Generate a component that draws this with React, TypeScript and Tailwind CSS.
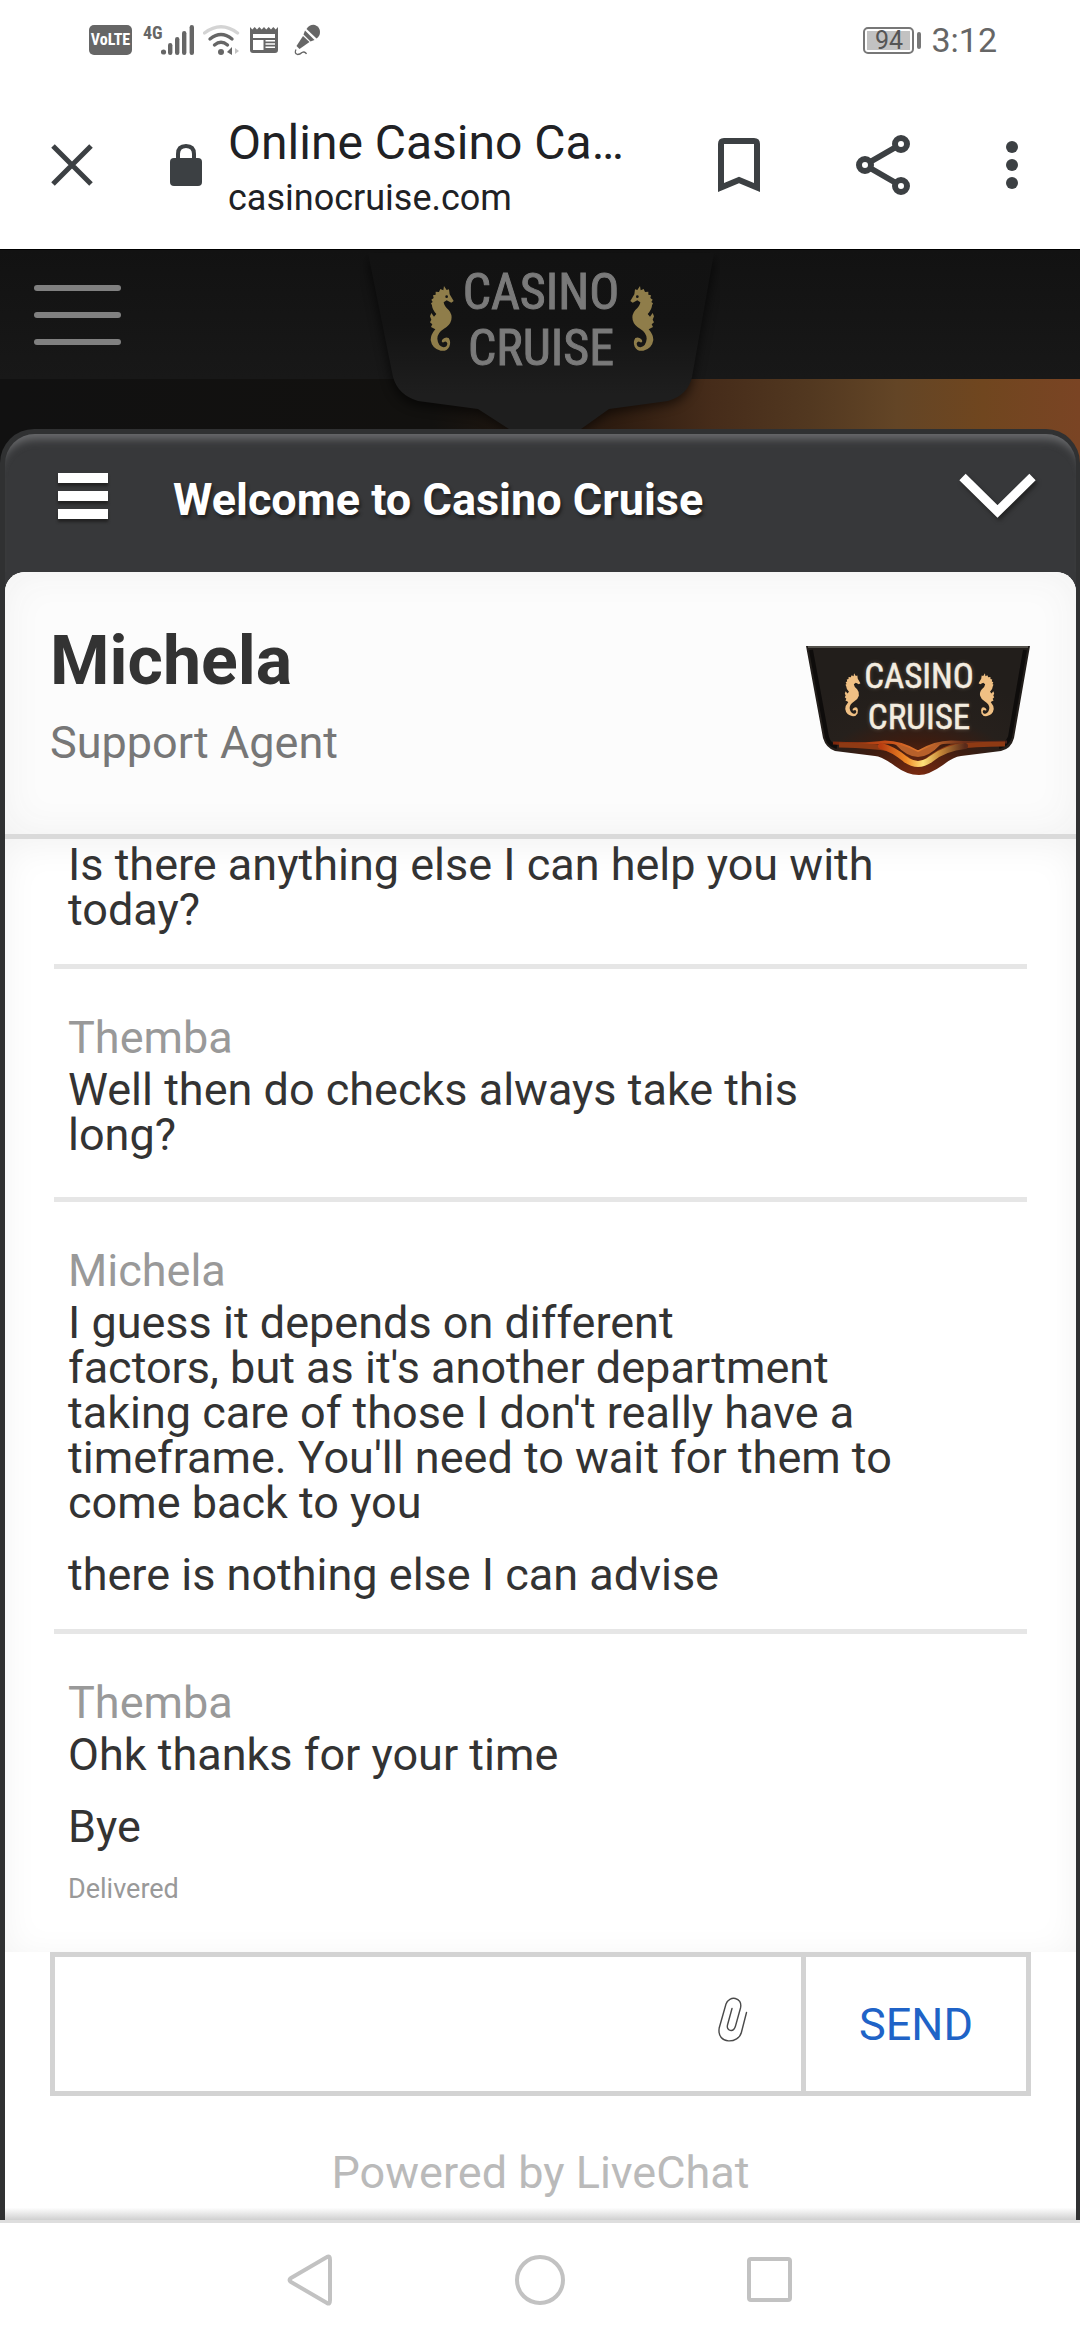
import React from "react";

const SEAHORSE =
  "M282 138 L290 150 L297 148 L299 163 L311 183 L304 188 L290 181 L281 187 Q282 198 296 210 Q308 224 304 240 Q300 256 282 266 Q262 278 262 296 Q264 318 280 322 Q292 322 292 310 Q288 301 281 307 Q273 309 276 300 Q284 289 296 294 Q304 306 298 320 Q290 335 272 332 Q246 326 242 300 Q242 284 256 268 L243 261 L247 253 L240 247 L244 239 L240 229 L244 219 L252 230 L259 222 Q246 208 246 196 L243 190 L248 186 L244 179 L251 174 L249 166 L257 164 L257 155 L267 156 L271 147 L280 151 Z";

const LOGO_FONT = '"Roboto Condensed", "Liberation Sans Narrow", "Roboto", sans-serif';

function HeaderLogo() {
  return (
    <svg viewBox="0 0 360 180" className="h-[180px] w-[360px]" role="img" aria-label="Casino Cruise">
      <defs>
        <linearGradient id="shield" x1="0" y1="0" x2="0" y2="1">
          <stop offset="0" stopColor="#121212" />
          <stop offset="0.4" stopColor="#131313" />
          <stop offset="0.8" stopColor="#1e1e1e" />
          <stop offset="1" stopColor="#1e1e1e" />
        </linearGradient>
        <filter id="shieldShadow" x="-20%" y="-20%" width="140%" height="140%">
          <feGaussianBlur stdDeviation="6" />
        </filter>
      </defs>
      <path d="M8 10 L33 134 Q39 152 57 156 L121 164 L161 188 L211 188 L249 164 L309 155 Q327 150 331 134 L355 10 Z" fill="#000" opacity="0.6" filter="url(#shieldShadow)" />
      <path d="M8 4 L33 128 Q38 146 58 152 L118 160 L149 180 L221 180 L249 160 L308 152 Q328 146 332 128 L354 4 Z" fill="url(#shield)" />
      <g fontFamily={LOGO_FONT} fontSize="50" fontWeight="400" fill="#7a7a7a" stroke="#7a7a7a" strokeWidth="1" textAnchor="middle">
        <text x="181" y="60">CASINO</text>
        <text x="181" y="116">CRUISE</text>
      </g>
      <g fill="#8f7d4a">
        <g transform="translate(-10 -9) scale(0.3333)">
          <path d={SEAHORSE} />
          <circle cx="290" cy="170" r="4" fill="#151515" />
        </g>
        <g transform="translate(374 -9) scale(-0.3333 0.3333)">
          <path d={SEAHORSE} />
          <circle cx="290" cy="170" r="4" fill="#151515" />
        </g>
      </g>
    </svg>
  );
}

function AgentLogo() {
  return (
    <svg viewBox="0 0 226 132" className="h-[132px] w-[226px]" role="img" aria-label="Casino Cruise">
      <defs>
        <radialGradient id="badge" cx="0.5" cy="1" r="0.75">
          <stop offset="0" stopColor="#7a2a10" />
          <stop offset="0.35" stopColor="#3d1c10" />
          <stop offset="0.6" stopColor="#26201c" />
          <stop offset="1" stopColor="#221e1b" />
        </radialGradient>
        <linearGradient id="waveTop" x1="0" x2="1">
          <stop offset="0" stopColor="#7a260c" />
          <stop offset="0.3" stopColor="#c44a16" />
          <stop offset="0.5" stopColor="#e07a30" />
          <stop offset="0.75" stopColor="#6b2f1a" />
          <stop offset="1" stopColor="#47211a" />
        </linearGradient>
        <linearGradient id="waveGold" x1="0" x2="1">
          <stop offset="0" stopColor="#b83c10" />
          <stop offset="0.3" stopColor="#f08a26" />
          <stop offset="0.5" stopColor="#ffe27a" />
          <stop offset="0.7" stopColor="#c88938" />
          <stop offset="1" stopColor="#5a2a1a" />
        </linearGradient>
        <filter id="textGlow" x="-20%" y="-20%" width="140%" height="140%">
          <feGaussianBlur stdDeviation="2" />
        </filter>
      </defs>
      <path d="M1 1 H225 L209 93 Q206 104 196 106 L156 111 Q148 112 138 120 Q124 130 114 130 Q102 130 90 121 Q76 111 70 111 L30 106 Q21 103 18 93 Z" fill="url(#badge)" />
      <path d="M3 2 H223" stroke="#55524c" strokeWidth="2" />
      <path d="M6 5 L22 92 Q24 100 32 102 M220 5 L205 92 Q202 100 194 102" fill="none" stroke="#0e0c0b" strokeWidth="4" />
      <path d="M28 98 Q62 100 80 97 Q96 97 113 107 Q130 97 146 97 Q170 98 202 97" fill="none" stroke="url(#waveTop)" strokeWidth="3" />
      <path d="M90 99 Q102 101 113 107 Q124 101 136 99 Q124 112 113 112 Q102 112 90 99 Z" fill="#b8602a" />
      <path d="M34 100 Q70 101 84 104 Q94 108 102 114 Q113 123 124 114 Q134 106 146 102 Q170 99 200 99" fill="none" stroke="#8e3a14" strokeWidth="5" />
      <path d="M76 101 Q88 104 100 114 Q113 124 126 114 Q140 103 160 101" fill="none" stroke="url(#waveGold)" strokeWidth="6" strokeLinecap="round" />
      <g fontFamily={LOGO_FONT} fontSize="35" fontWeight="400" textAnchor="middle">
        <g fill="#a89880" opacity="0.5" filter="url(#textGlow)">
          <text x="114" y="43">CASINO</text>
          <text x="114" y="84">CRUISE</text>
        </g>
        <g fill="#f4ede0" stroke="#f4ede0" strokeWidth="0.5">
          <text x="114" y="43">CASINO</text>
          <text x="114" y="84">CRUISE</text>
        </g>
      </g>
      <g fill="#f0c084">
        <g transform="translate(-13 -2) scale(0.22)">
          <path d={SEAHORSE} />
        </g>
        <g transform="translate(242 -2) scale(-0.22 0.22)">
          <path d={SEAHORSE} />
        </g>
      </g>
    </svg>
  );
}

function StatusBar() {
  return (
    <div className="flex h-20 items-center justify-between pr-[83px] pl-[89px] text-[#666]">
      <div className="flex items-center">
        <span className="flex h-[30px] w-[43px] items-center justify-center rounded-[5px] bg-[#666] font-['Roboto_Condensed','Liberation_Sans_Narrow',Roboto,sans-serif] text-[16px] leading-none font-bold text-white">
          VoLTE
        </span>
        <span className="ml-[11px] w-[18px] self-start font-['Roboto_Condensed','Liberation_Sans_Narrow',Roboto,sans-serif] text-[18px] leading-none font-bold">
          4G
        </span>
        <svg viewBox="0 0 34 30" className="h-[30px] w-[34px]" fill="currentColor" aria-hidden="true">
          <circle cx="2.5" cy="27" r="2.6" />
          <rect x="7" y="18" width="4.4" height="12" rx="2.2" />
          <rect x="14" y="12" width="4.4" height="18" rx="2.2" />
          <rect x="21" y="6" width="4.4" height="24" rx="2.2" />
          <rect x="28.600" y="0" width="4.400" height="30" rx="2.2" />
        </svg>
        <svg viewBox="0 0 37 30" className="ml-2 h-[30px] w-[37px]" fill="none" stroke="currentColor" strokeWidth="3.4" strokeLinecap="round" aria-hidden="true">
          <path d="M1.500 8 Q18 -4.500 34.500 8" stroke="#d4d4d4" />
          <path d="M7 14 Q18 5 29 14" />
          <path d="M11.500 20 Q18 14.500 24.500 20" />
          <circle cx="18" cy="27" r="3" fill="currentColor" stroke="none" />
          <path d="M29 22 V30 L24 27 Z" fill="currentColor" stroke="none" />
          <path d="M32 23 V29 L36 26 Z" fill="#c4c4c4" stroke="none" />
        </svg>
        <svg viewBox="0 0 28 26" className="ml-[10px] h-[26px] w-7" aria-hidden="true">
          <path d="M0 0 L2.300 2.500 L4.700 0 L7 2.500 L9.300 0 L11.700 2.500 L14 0 L16.300 2.500 L18.700 0 L21 2.500 L23.300 0 L25.700 2.500 L28 0 V23 Q28 26 25 26 H3 Q0 26 0 23 Z" fill="currentColor" />
          <path d="M3 7 H25 V11 H3 Z M3 13 H13.500 V23 H3 Z M15.500 13 H25 V14.500 H15.500 Z M15.500 16.200 H25 V17.700 H15.500 Z M15.500 19.400 H25 V20.900 H15.500 Z" fill="#fff" />
        </svg>
        <svg viewBox="0 0 28 32" className="ml-4 h-8 w-7" fill="currentColor" aria-hidden="true">
          <path d="M12.500 5 Q16 0 21 1 Q26 3 26 8 Q26 12 22.500 14.500 Z" />
          <path d="M11 6.500 L20.500 16 L16.500 17.500 L9.500 10.500 Z" />
          <path d="M9 12 L15.500 18 L5.500 25 L2.500 22 Z" />
          <path d="M2 25.500 Q0 29.500 3.500 30.500 Q6 30.500 8 28.500 Q11 27 12.500 30" fill="none" stroke="currentColor" strokeWidth="1.300" />
        </svg>
      </div>
      <div className="flex items-center">
        <div className="flex h-[27px] w-[51px] rounded-[5px] border-2 border-[#777] p-[2px]">
          <span className="flex flex-1 items-center justify-center bg-[#c2c2c2] text-[25px] leading-none text-[#555]">
            94
          </span>
        </div>
        <span className="ml-[3px] h-[17px] w-1 rounded-[2px] bg-[#777]" />
        <time className="ml-[10px] text-[34px] leading-none">3:12</time>
      </div>
    </div>
  );
}

function BrowserBar() {
  return (
    <header className="flex h-[169px] items-center pr-[34px] pl-[50px] text-[#3c4043]">
      <button aria-label="Close tab" className="shrink-0">
        <svg viewBox="0 0 44 44" className="size-11" stroke="currentColor" strokeWidth="5" aria-hidden="true">
          <path d="M3 3 L41 41 M41 3 L3 41" />
        </svg>
      </button>
      <svg viewBox="0 0 32 42" className="ml-[76px] h-[42px] w-8 shrink-0" aria-hidden="true">
        <rect x="0" y="14" width="32" height="28" rx="4" fill="currentColor" />
        <path d="M8 16 V10 Q8 2 16 2 Q24 2 24 10 V16" fill="none" stroke="currentColor" strokeWidth="4" />
      </svg>
      <div className="ml-[26px] w-[400px] min-w-0 shrink pt-[10px] text-[#202124]">
        <div className="truncate text-[48px] leading-[56px]">Online Casino Ca…</div>
        <div className="truncate text-[36px] leading-[54px]">casinocruise.com</div>
      </div>
      <div className="ml-auto flex shrink-0 items-center">
        <button aria-label="Bookmark">
          <svg viewBox="0 0 42 54" className="h-[54px] w-[42px]" fill="none" stroke="currentColor" strokeWidth="6" aria-hidden="true">
            <path d="M3 49.500 V6 Q3 3 6 3 H36 Q39 3 39 6 V49.500 L21 42 Z" />
          </svg>
        </button>
        <button aria-label="Share" className="ml-24">
          <svg viewBox="0 0 54 60" className="h-[60px] w-[54px]" fill="none" stroke="currentColor" strokeWidth="6" aria-hidden="true">
            <path d="M14 27 L40 12 M14 33 L40 48" />
            <circle cx="9" cy="30" r="6" />
            <circle cx="45" cy="9" r="6" />
            <circle cx="45" cy="51" r="6" />
          </svg>
        </button>
        <button aria-label="More options" className="ml-[82px]">
          <svg viewBox="0 0 54 54" className="h-[54px] w-[54px]" fill="currentColor" aria-hidden="true">
            <circle cx="20" cy="9" r="6" />
            <circle cx="20" cy="27" r="6" />
            <circle cx="20" cy="45" r="6" />
          </svg>
        </button>
      </div>
    </header>
  );
}

function SiteBackdrop() {
  return (
    <div className="relative overflow-hidden bg-[#111]">
      <div className="flex h-[130px] items-center border-t border-black bg-linear-to-b from-[#121212] to-[#181818] pl-[34px]">
        <button aria-label="Site menu" className="flex w-[87px] flex-col gap-[21px]">
          <span className="h-[6px] rounded-full bg-[#808080]" />
          <span className="h-[6px] rounded-full bg-[#808080]" />
          <span className="h-[6px] rounded-full bg-[#808080]" />
        </button>
      </div>
      <div className="h-[90px] bg-[linear-gradient(90deg,#111_0%,#12110f_40%,#2e1c10_57%,#462c1a_66%,#523820_75%,#634526_83%,#70461f_91%,#7a4424_100%)]" />
      <div className="absolute inset-x-0 top-0 flex justify-center">
        <HeaderLogo />
      </div>
    </div>
  );
}

function Message({
  author,
  lines,
  own = false,
  delivered = false,
}: {
  author?: string;
  lines: React.ReactNode[];
  own?: boolean;
  delivered?: boolean;
}) {
  const spacing = delivered ? "pt-[46px]" : own ? "border-b-5 pt-[46px] pb-10" : author ? "border-b-5 pt-[46px] pb-8" : "border-b-5 pb-8 pt-[3px]";
  return (
    <article className={`border-[#e6e6e6] px-[14px] text-[45px] leading-[45px] text-[#333] ${spacing}`}>
      {author && <h3 className="mb-[7px] text-[#999]">{author}</h3>}
      <div className="flex max-w-[836px] flex-col gap-[27px]">
        {lines.map((line, i) => (
          <p key={i}>{line}</p>
        ))}
      </div>
      {delivered && <p className="mt-[22px] text-[27px] leading-[36px] text-[#999]">Delivered</p>}
    </article>
  );
}

function ChatPanel() {
  return (
    <main className="relative -mt-10 flex flex-1 flex-col rounded-t-[34px] border-t-5 border-r-4 border-l-5 border-[#303132] bg-[#37383a]">
      <div className="flex h-[138px] items-center rounded-t-[30px] pr-[40px] pl-[53px] text-white shadow-[inset_0_12px_8px_-7px_#6a6b6d]">
        <button aria-label="Chat menu" className="mb-[14px] flex w-[50px] flex-col gap-2">
          <span className="h-[10px] bg-white shadow-[0_3px_3px_#222]" />
          <span className="h-[10px] bg-white shadow-[0_3px_3px_#222]" />
          <span className="h-[10px] bg-white shadow-[0_3px_3px_#222]" />
        </button>
        <h1 className="mb-[6px] ml-[65px] text-[45px] leading-[54px] font-bold text-shadow-[2px_3px_3px_#222]">Welcome to Casino Cruise</h1>
        <button aria-label="Minimize chat" className="mb-[14px] ml-auto">
          <svg viewBox="0 0 77 46" className="h-[46px] w-[77px] drop-shadow-[2px_3px_2px_#222]" fill="none" stroke="currentColor" strokeWidth="9" aria-hidden="true">
            <path d="M3.500 4 L38.500 38.500 L73.500 4" />
          </svg>
        </button>
      </div>

      <div className="flex flex-1 flex-col overflow-hidden rounded-t-[20px] bg-white">
        <section className="flex h-[267px] items-center justify-between border-b-5 border-[#dadada] bg-[#fcfcfc] px-[45px] shadow-[inset_0_0_40px_#f1f1f1]">
          <div>
            <h2 className="text-[68px] leading-[80px] font-bold text-[#333]">Michela</h2>
            <p className="text-[45px] leading-[84px] text-[#777]">Support Agent</p>
          </div>
          <div className="pt-4">
            <AgentLogo />
          </div>
        </section>

        <section aria-label="Conversation" className="flex-1 px-[49px] pb-11 shadow-[inset_0_6px_36px_#f2f2f2]">
          <Message lines={["Is there anything else I can help you with today?"]} />
          <Message own author="Themba" lines={["Well then do checks always take this long?"]} />
          <Message
            author="Michela"
            lines={[
              <>
                I guess it depends on different
                <br />
                factors, but as it's another department taking care of those I don't really have a timeframe. You'll need to wait for them to come back to you
              </>,
              "there is nothing else I can advise",
            ]}
          />
          <Message own delivered author="Themba" lines={["Ohk thanks for your time", "Bye"]} />
        </section>

        <form className="mx-[45px] flex h-36 border-5 border-[#d3d3d3]" onSubmit={(e) => e.preventDefault()}>
          <input aria-label="Message" className="min-w-0 flex-1 bg-transparent px-5 text-[45px] outline-none" />
          <button type="button" aria-label="Attach file" className="mr-[53px] mb-2">
            <svg viewBox="0 0 30 46" className="h-[46px] w-[30px]" fill="none" stroke="#4a4a4a" strokeWidth="1.400" strokeLinecap="round" aria-hidden="true">
              <path d="M28.500 15.500 L23.500 35 C21 47 -1.500 48 1.200 31 L8 7 C11 -2 25 0 22.500 11 L17.500 29 C15.500 36 8 34 9.500 28 L14 11.500" />
            </svg>
          </button>
          <button type="submit" className="w-[225px] border-l-5 border-[#d3d3d3] text-[45px] leading-none text-[#2063c7]">
            SEND
          </button>
        </form>
        <footer className="h-[124px] bg-linear-to-b from-white from-90% to-[#d0d0d0] pt-[50px] text-center text-[45px] leading-[54px] text-[#bababa]">
          Powered by <a href="#livechat">LiveChat</a>
        </footer>
      </div>
    </main>
  );
}

function NavBar() {
  return (
    <nav aria-label="System navigation" className="flex h-[120px] items-center justify-center gap-[178px] border-t-3 border-[#dedede] bg-white pb-[3px]">
      <button aria-label="Back">
        <svg viewBox="0 0 52 52" className="size-[52px]" fill="none" stroke="#c2c2c2" strokeWidth="4" strokeLinejoin="round" aria-hidden="true">
          <path d="M43 3 Q46 1 46 6 V46 Q46 51 43 49 L7 28 Q4 26 7 24 Z" />
        </svg>
      </button>
      <button aria-label="Home">
        <svg viewBox="0 0 52 52" className="size-[52px]" fill="none" stroke="#c2c2c2" strokeWidth="4" aria-hidden="true">
          <circle cx="26" cy="26" r="23" />
        </svg>
      </button>
      <button aria-label="Recent apps">
        <svg viewBox="0 0 52 52" className="size-[52px]" fill="none" stroke="#c2c2c2" strokeWidth="4" aria-hidden="true">
          <rect x="5" y="5" width="41" height="41" rx="2" />
        </svg>
      </button>
    </nav>
  );
}

export default function App() {
  return (
    <div className="flex min-h-screen flex-col bg-white font-[Roboto,sans-serif]">
      <div className="h-[249px]">
        <StatusBar />
        <BrowserBar />
      </div>
      <SiteBackdrop />
      <ChatPanel />
      <NavBar />
    </div>
  );
}
